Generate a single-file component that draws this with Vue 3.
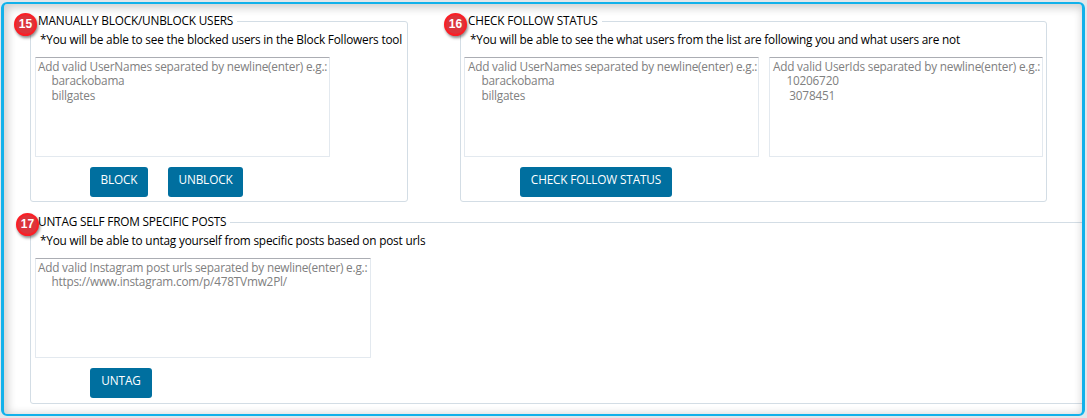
<script setup>
const topGroups = [
  {
    id: 15, cls: 'g15', title: 'MANUALLY BLOCK/UNBLOCK USERS',
    note: '*You will be able to see the blocked users in the Block Followers tool',
    areas: [{ cls: 'names', head: 'Add valid UserNames separated by newline(enter) e.g.:', body: '    barackobama\n    billgates' }],
    buttons: [{ cls: 'b-block', label: 'BLOCK' }, { cls: 'b-unblock', label: 'UNBLOCK' }],
  },
  {
    id: 16, cls: 'g16', title: 'CHECK FOLLOW STATUS',
    note: '*You will be able to see the what users from the list are following you and what users are not',
    areas: [
      { cls: 'names', head: 'Add valid UserNames separated by newline(enter) e.g.:', body: '    barackobama\n    billgates' },
      { cls: 'ids', head: 'Add valid UserIds separated by newline(enter) e.g.:', body: '    10206720\n     3078451' },
    ],
    buttons: [{ cls: 'b-check', label: 'CHECK FOLLOW STATUS' }],
  },
]
const bottomGroups = [
  {
    id: 17, cls: 'g17', title: 'UNTAG SELF FROM SPECIFIC POSTS',
    note: '*You will be able to untag yourself from specific posts based on post urls',
    areas: [{ cls: 'urls', head: 'Add valid Instagram post urls separated by newline(enter) e.g.:', body: '    https://www.instagram.com/p/478TVmw2Pl/' }],
    buttons: [{ cls: 'b-untag', label: 'UNTAG' }],
  },
]
const rows = [topGroups, bottomGroups]
</script>

<template>
  <main class="page">
    <div class="frame"></div>
    <div v-for="(row, i) in rows" :key="i" class="row">
      <fieldset v-for="g in row" :key="g.id" class="group" :class="g.cls">
        <legend>{{ g.title }}</legend>
        <b class="badge">{{ g.id }}</b>
        <p class="note">{{ g.note }}</p>
        <div class="areas">
          <div v-for="a in g.areas" :key="a.cls" class="area" :class="a.cls">
            <div class="head">{{ a.head }}</div>
            <div class="body">{{ a.body }}</div>
          </div>
        </div>
        <div class="buttons">
          <button v-for="b in g.buttons" :key="b.label" :class="b.cls">{{ b.label }}</button>
        </div>
      </fieldset>
    </div>
  </main>
</template>

<style>
body { margin: 0; overflow: hidden; }
</style>

<style scoped>
* { box-sizing: border-box; }
.page {
  position: relative; width: 1087px; height: 418px; overflow: hidden;
  padding: 13px 0 0 30px; background: #fff;
  font: 11.8px/16px "Open Sans", "Noto Sans", sans-serif; letter-spacing: -.19px; color: #000;
}
.frame {
  position: absolute; left: 1px; top: 2px; width: 1084px; height: 414px;
  border: 2px solid #12b1ea; border-width: 2px 3px; border-radius: 6px; pointer-events: none; z-index: 2;
  box-shadow: 0 0 0 8px #e2e7eb, inset 2px 2px 9px 2px rgba(0, 0, 0, .19);
}
.row { display: flex; gap: 52px; height: 201px; }
.group {
  position: relative; flex: none; margin: 0; padding: 0 0 0 4px; min-width: 0;
  height: 189px; border: 1px solid #d3dde5; border-radius: 3px;
}
.g15 { width: 378px; }
.g16 { width: 587px; padding-left: 3px; }
.g17 { width: 1070px; height: 190px; }
legend { padding: 0 4px 0 3px; height: 16px; line-height: 14px; white-space: nowrap; }
.g16 legend { padding-left: 4px; }
.badge {
  position: absolute; left: -17px; top: -16px; width: 23px; height: 23px; z-index: 3;
  border-radius: 50%; border: 2px solid #fb1e25; background: #dc343b;
  box-shadow: 1px 2px 3px rgba(0, 0, 0, .45);
  color: #fff; font: bold 12px/19px "Liberation Sans", sans-serif; text-align: center; letter-spacing: 0;
}
.g17 .badge { left: -15px; top: -17px; }
.note { margin: 3px 0 0 5px; height: 16px; line-height: 14px; white-space: nowrap; }
.g16 .note { margin-left: 6px; letter-spacing: -.21px; }
.areas { display: flex; gap: 10px; margin-top: 9px; }
.area {
  height: 100px; padding: 1px 0 0 2px; border: 1px solid #e3e9ef; border-top-color: #abadb3;
  border-radius: 1px; color: #808080; line-height: 15px; white-space: pre; letter-spacing: -.21px;
}
.names { width: 295px; }
.ids { width: 274px; }
.urls { width: 336px; }
.g16 .area { padding-left: 3px; }
.head { height: 14px; line-height: 14px; }
.body { padding-left: 2px; }
.buttons { display: flex; gap: 20px; margin: 10px 0 0 55px; }
.g16 .buttons { margin-left: 56px; }
button {
  height: 30px; padding: 0 0 5px; border: 0; border-radius: 3px; background: #006f9f; color: #fff;
  font: 11.8px/25px "Open Sans", "Noto Sans", sans-serif; letter-spacing: -.15px; white-space: nowrap; text-align: center;
}
.b-block { width: 58px; }
.b-unblock { width: 75px; }
.b-check { width: 152px; }
.b-untag { width: 62px; }
</style>
